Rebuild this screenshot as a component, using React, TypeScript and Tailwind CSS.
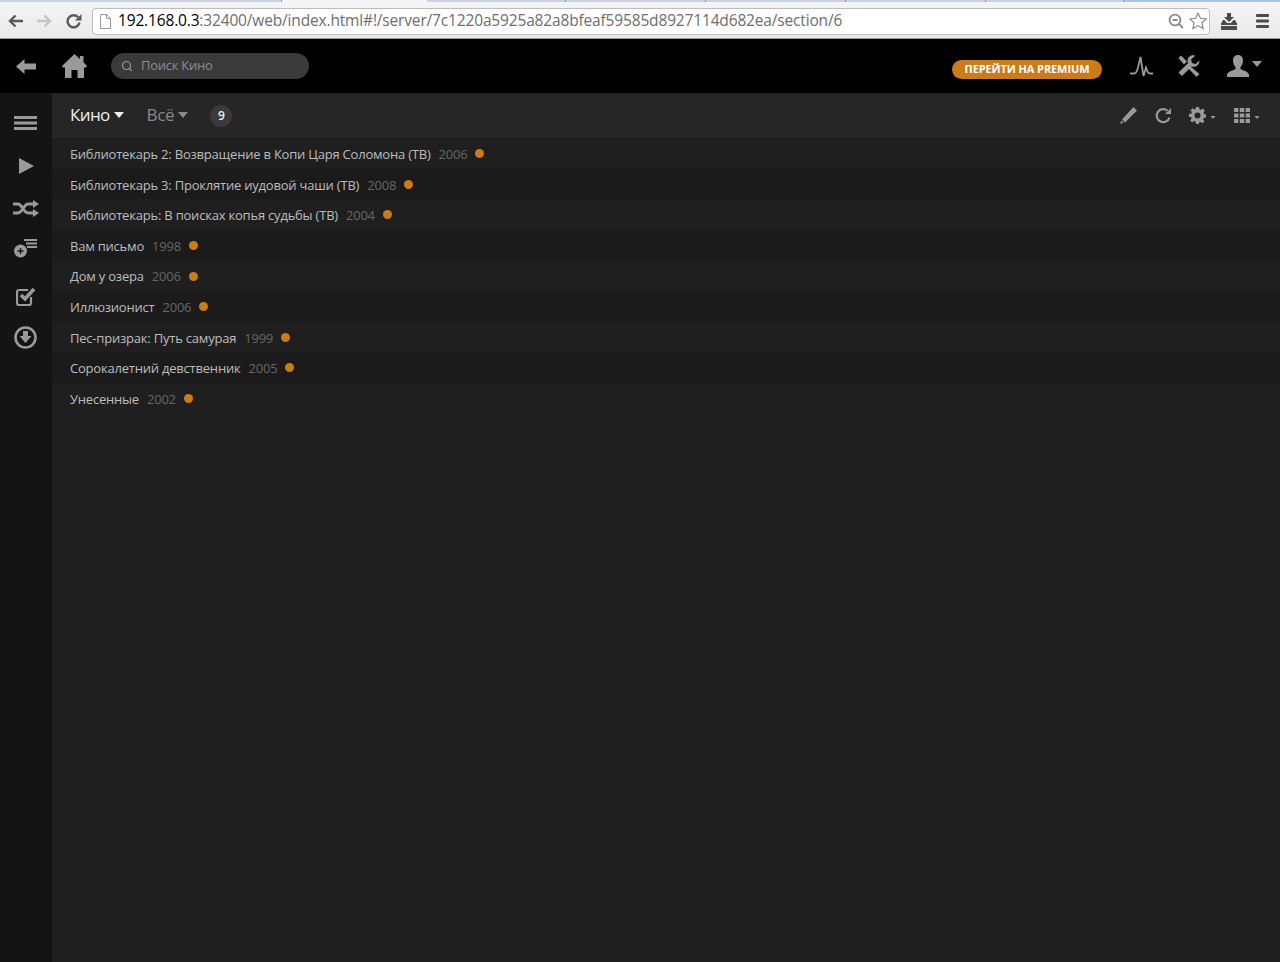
import { Search } from "lucide-react";

const movies = [
    { title: "Библиотекарь 2: Возвращение в Копи Царя Соломона (ТВ)", year: "2006" },
    { title: "Библиотекарь 3: Проклятие иудовой чаши (ТВ)", year: "2008" },
    { title: "Библиотекарь: В поисках копья судьбы (ТВ)", year: "2004" },
    { title: "Вам письмо", year: "1998" },
    { title: "Дом у озера", year: "2006" },
    { title: "Иллюзионист", year: "2006" },
    { title: "Пес-призрак: Путь самурая", year: "1999" },
    { title: "Сорокалетний девственник", year: "2005" },
    { title: "Унесенные", year: "2002" },
];

function Caret({ className }: { className: string }) {
    return (
        <svg className={className} viewBox="0 0 10 6">
            <path d="M0 0h10L5 6z" fill="currentColor" />
        </svg>
    );
}

function BrowserBar() {
    return (
        <div className="relative flex h-[39px] items-center bg-gradient-to-b from-[#f6f6f6] to-[#e9e9e9] border-b border-[#9a9a9a] pt-[4px]">
            <div className="absolute left-0 top-0 flex h-[2px] w-full">
                <div className="w-[140px] bg-[#c9d3e3]" />
                <div className="w-[142px] bg-[#c9d3e3] border-r border-[#8d97a8]" />
                <div className="w-[145px]" />
                <div className="w-[139px] bg-[#c9d3e3] border-r border-[#8d97a8]" />
                <div className="w-[140px] bg-[#c9d3e3] border-r border-[#8d97a8]" />
                <div className="w-[140px] bg-[#c9d3e3] border-r border-[#8d97a8]" />
                <div className="w-[140px] bg-[#c9d3e3] border-r border-[#8d97a8]" />
                <div className="w-[138px] bg-[#c9d3e3] border-r border-[#8d97a8]" />
                <div className="flex-1 bg-[#a9c6e8]" />
            </div>
            <svg className="ml-[7px] h-4 w-[17px] text-[#5a5a5a]" viewBox="0 0 17 16" fill="none" stroke="currentColor" strokeWidth="2.4">
                <path d="M16 8H3M8.5 2.5 3 8l5.5 5.5" />
            </svg>
            <svg className="ml-[12px] h-4 w-[17px] text-[#c4c4c4]" viewBox="0 0 17 16" fill="none" stroke="currentColor" strokeWidth="2.4">
                <path d="M1 8h13M8.5 2.5 14 8l-5.5 5.5" />
            </svg>
            <svg className="ml-[13px] h-4 w-4 text-[#5a5a5a]" viewBox="0 0 16 16" fill="none">
                <path d="M13.5 9.5a6 6 0 1 1-1.4-5.2" stroke="currentColor" strokeWidth="2.4" />
                <path d="M15.5 1v6.5H9z" fill="currentColor" />
            </svg>
            <div className="ml-[10px] flex h-[27px] w-[1118px] items-center rounded-sm border border-[#bdbdbd] bg-white">
                <svg className="ml-[6px] h-[15px] w-[13px]" viewBox="0 0 13 15" fill="#fff" stroke="#9a9a9a">
                    <path d="M1.5.5h6l4 4v10h-10zM7.5.5v4h4" />
                </svg>
                <span className="ml-[6px] font-['Open_Sans',sans-serif] text-[15.5px] tracking-[-0.16px] text-black">
                    192.168.0.3
                    <span className="text-[#6e6e6e]">:32400/web/index.html#!/server/7c1220a5925a82a8bfeaf59585d8927114d682ea/section/6</span>
                </span>
                <svg className="ml-auto h-4 w-4 text-[#8a8a8a]" viewBox="0 0 16 16" fill="none" stroke="currentColor" strokeWidth="1.8">
                    <circle cx="7" cy="7" r="5.4" />
                    <path d="M4.5 7h5M11 11l4 4" />
                </svg>
                <svg className="ml-[5px] mr-[2px] h-[18px] w-[18px] text-[#8a8a8a]" viewBox="0 0 18 18" fill="#fff" stroke="currentColor" strokeWidth="1.2">
                    <path d="M9 1l2.4 5.3 5.8.6-4.3 3.9 1.2 5.7L9 13.6l-5.1 2.9 1.2-5.7L.8 6.9l5.8-.6z" />
                </svg>
            </div>
            <svg className="ml-[11px] h-[17px] w-[16px] text-[#4a4a4a]" viewBox="0 0 16 17" fill="currentColor">
                <path d="M6 0h4v4h3L8 9 3 4h3z" />
                <path d="M2 7h1.500L6 10h4l2.500-3H14l2 3.500V12H0v-1.500zM0 13h16v4H0z" />
            </svg>
            <svg className="ml-[19px] h-[14px] w-[13px] text-[#4a4a4a]" viewBox="0 0 13 14" fill="currentColor">
                <rect y="0" width="13" height="3" rx="1" />
                <rect y="5.5" width="13" height="3" rx="1" />
                <rect y="11" width="13" height="3" rx="1" />
            </svg>
        </div>
    );
}

function TopBar() {
    return (
        <div className="flex h-[54px] items-center bg-black text-[#9a9a9a]">
            <svg className="ml-4 h-[15px] w-[20px]" viewBox="0 0 20 15" fill="currentColor">
                <path d="M0 7.5 8.5 0v4.5H20v6H8.500V15z" />
            </svg>
            <svg className="ml-[26px] h-[24px] w-[25px]" viewBox="0 0 25 24" fill="currentColor">
                <path d="M12.500 0 18 5V2h3.500v6.300L25 12l-1 1.500h-2V24h-6.500v-8h-6v8H3V13.500H1L0 12z" />
            </svg>
            <div className="ml-[24px] flex h-[26px] w-[198px] items-center rounded-full bg-[#3a3a3a] pl-[10px]">
                <Search size={12} strokeWidth={2.4} className="text-[#999]" />
                <span className="ml-[8px] font-['Open_Sans',sans-serif] text-[13px] tracking-[-0.25px] text-[#8c8c8c]">Поиск Кино</span>
            </div>
            <div className="ml-auto mt-[6px] flex h-[19px] w-[150px] items-center justify-center rounded-full bg-[#cc7b19] font-['Open_Sans',sans-serif] text-[11px] font-bold tracking-[-0.1px] text-white">
                ПЕРЕЙТИ НА PREMIUM
            </div>
            <svg className="ml-[28px] h-[23px] w-[23px]" viewBox="0 0 23 23" fill="none" stroke="currentColor" strokeWidth="1.8">
                <path d="M0 18.500h4.500c1.500 0 2.500-2.500 3.500-6L10.500 2l3 19 2.500-8.500 2 5c.5 1 1.500 1 2.500 1H23" />
            </svg>
            <svg className="ml-[24px] h-[23px] w-[23px]" viewBox="0 0 23 23" fill="currentColor">
                <path d="M16.500 0a6 6 0 0 0-5.600 8.200L1.500 17.500 5 21l9.500-9.500a6 6 0 0 0 8-6L18.500 9 15 8l-1-3.500L18 1z" />
                <path d="M1.500 3 4 .5l6 6-3 3z" />
                <path d="m13 11 9.500 8-3 3-8.500-9z" />
            </svg>
            <svg className="ml-[27px] h-[22px] w-[22px]" viewBox="0 0 22 22" fill="currentColor">
                <path d="M11 0c3.500 0 5 2.500 5 5.500 0 2.500-1 5-2.500 6.500v2c1 1 8.500 2.500 8.500 6v2H0v-2c0-3.500 7.500-5 8.500-6v-2C7 10.500 6 8 6 5.500 6 2.500 7.500 0 11 0z" />
            </svg>
            <Caret className="ml-[3px] mr-[18px] mb-[5px] h-[6px] w-[10px]" />
        </div>
    );
}

function Sidebar() {
    return (
        <div className="flex w-[52px] shrink-0 flex-col items-center bg-[#141414] pr-[1px] text-[#9a9a9a]">
            <svg className="mt-[23px] h-[14px] w-[23px]" viewBox="0 0 23 14" fill="currentColor">
                <rect width="23" height="3" />
                <rect y="5.500" width="23" height="3" />
                <rect y="11" width="23" height="3" />
            </svg>
            <svg className="ml-[2px] mt-[28px] h-[16px] w-[15px]" viewBox="0 0 15 16" fill="currentColor">
                <path d="M0 0l15 8-15 8z" />
            </svg>
            <svg className="mt-[26px] h-[17px] w-[26px]" viewBox="0 0 26 17" fill="none" stroke="currentColor" strokeWidth="3">
                <path d="M0 4h5c4 0 6 9 10 9h6M0 13h5c4 0 6-9 10-9h6" />
                <path d="M20 0l6 4-6 4zM20 9l6 4-6 4z" fill="currentColor" stroke="none" />
            </svg>
            <svg className="mt-[22px] h-[19px] w-[23px]" viewBox="0 0 23 19" fill="none">
                <circle cx="6.500" cy="12" r="6.500" fill="currentColor" />
                <path d="M3.500 12h6M6.500 9v6" stroke="#141414" strokeWidth="1.300" />
                <path d="M10 1h13M12 4.500h11M13 8h10" stroke="currentColor" strokeWidth="2" />
            </svg>
            <svg className="ml-[1px] mt-[29px] h-[19px] w-[21px]" viewBox="0 0 21 19" fill="none" stroke="currentColor" strokeWidth="2.200">
                <path d="M15 10v6a2 2 0 0 1-2 2H3a2 2 0 0 1-2-2V5a2 2 0 0 1 2-2h9" />
                <path d="M5 8l4 4 9-10" strokeWidth="3.600" />
            </svg>
            <svg className="mt-[20px] h-[23px] w-[23px]" viewBox="0 0 23 23">
                <circle cx="11.500" cy="11.500" r="10" fill="none" stroke="currentColor" strokeWidth="2.600" />
                <path d="M9 5h5v5h3.500l-6 7-6-7H9z" fill="currentColor" />
            </svg>
        </div>
    );
}

function Toolbar() {
    return (
        <div className="flex h-[45px] shrink-0 items-center bg-[#262626] pl-[18px] font-['Open_Sans',sans-serif] text-[#9a9a9a]">
            <span className="mb-[2px] text-[17px] tracking-[-0.65px] text-[#eeeeee]">Кино</span>
            <Caret className="mb-[2px] ml-[4px] h-[6px] w-[10px] text-[#eeeeee]" />
            <span className="mb-[2px] ml-[23px] text-[17px] tracking-[-0.3px] text-[#8a8a8a]">Всё</span>
            <Caret className="mb-[2px] ml-[4px] h-[6px] w-[10px] text-[#8a8a8a]" />
            <span className="ml-[22px] flex h-[22px] w-[22px] items-center justify-center rounded-full bg-[#3a3a3a] text-[12px] font-semibold text-[#eeeeee]">9</span>
            <svg className="ml-auto h-[17px] w-[17px]" viewBox="0 0 17 17" fill="currentColor">
                <path d="M13.500 0 17 3.500 5 15.500l-3-3zM1.500 13.500l2 2L0 17z" />
            </svg>
            <svg className="ml-[18px] h-[17px] w-[16px]" viewBox="0 0 16 17" fill="none">
                <path d="M14.500 10.500a6.500 6.500 0 1 1-2-6.800" stroke="currentColor" strokeWidth="2.200" />
                <path d="M16 1v6h-6z" fill="currentColor" />
            </svg>
            <svg className="ml-[18px] h-[17px] w-[17px]" viewBox="0 0 17 17" fill="currentColor">
                <path fillRule="evenodd" d="M7 0h3l.4 2.300 1.500.6L13.800 1.500l2 2-1.400 2 .6 1.500 2 .5v3l-2.300.4-.6 1.500 1.400 1.900-2 2-2-1.400-1.500.6L10 17H7l-.4-2.300-1.500-.6-1.900 1.400-2-2 1.400-2-.6-1.500L0 10V7l2.300-.4.600-1.500L1.500 3.200l2-2 2 1.400 1.100-.6zM8.500 5.500a3 3 0 1 0 0 6 3 3 0 0 0 0-6z" />
            </svg>
            <Caret className="ml-[4px] mt-[4px] h-[3px] w-[6px]" />
            <svg className="ml-[18px] h-[15px] w-[16px]" viewBox="0 0 16 15" fill="currentColor">
                <path d="M0 0h4.400v4H0zM5.800 0h4.400v4H5.800zM11.600 0H16v4h-4.400zM0 5.500h4.400v4H0zM5.800 5.500h4.400v4H5.800zM11.600 5.500H16v4h-4.400zM0 11h4.400v4H0zM5.800 11h4.400v4H5.800zM11.600 11H16v4h-4.400z" />
            </svg>
            <Caret className="ml-[4px] mr-[20px] mt-[4px] h-[3px] w-[6px]" />
        </div>
    );
}

export default function App() {
    return (
        <div className="flex h-[962px] flex-col overflow-hidden bg-[#1f1f1f]">
            <BrowserBar />
            <TopBar />
            <div className="flex flex-1">
                <Sidebar />
                <div className="flex flex-1 flex-col">
                    <Toolbar />
                    <ul className="font-['Open_Sans',sans-serif] text-[13px] tracking-[-0.21px]">
                        {movies.map((movie, i) => (
                            <li
                                key={movie.title}
                                className={
                                    i % 2 === 0
                                        ? "flex h-[30.6px] items-center bg-[#1f1f1f] pl-[18px] pt-[3px]"
                                        : "flex h-[30.6px] items-center bg-[#1b1b1b] pl-[18px] pt-[3px]"
                                }
                            >
                                <span className="text-[#bdbdbd]">{movie.title}</span>
                                <span className="ml-2 text-[#666666]">{movie.year}</span>
                                <span className="mb-[2px] ml-2 h-[9px] w-[9px] rounded-full bg-[#cc7b19]" />
                            </li>
                        ))}
                    </ul>
                </div>
            </div>
        </div>
    );
}
